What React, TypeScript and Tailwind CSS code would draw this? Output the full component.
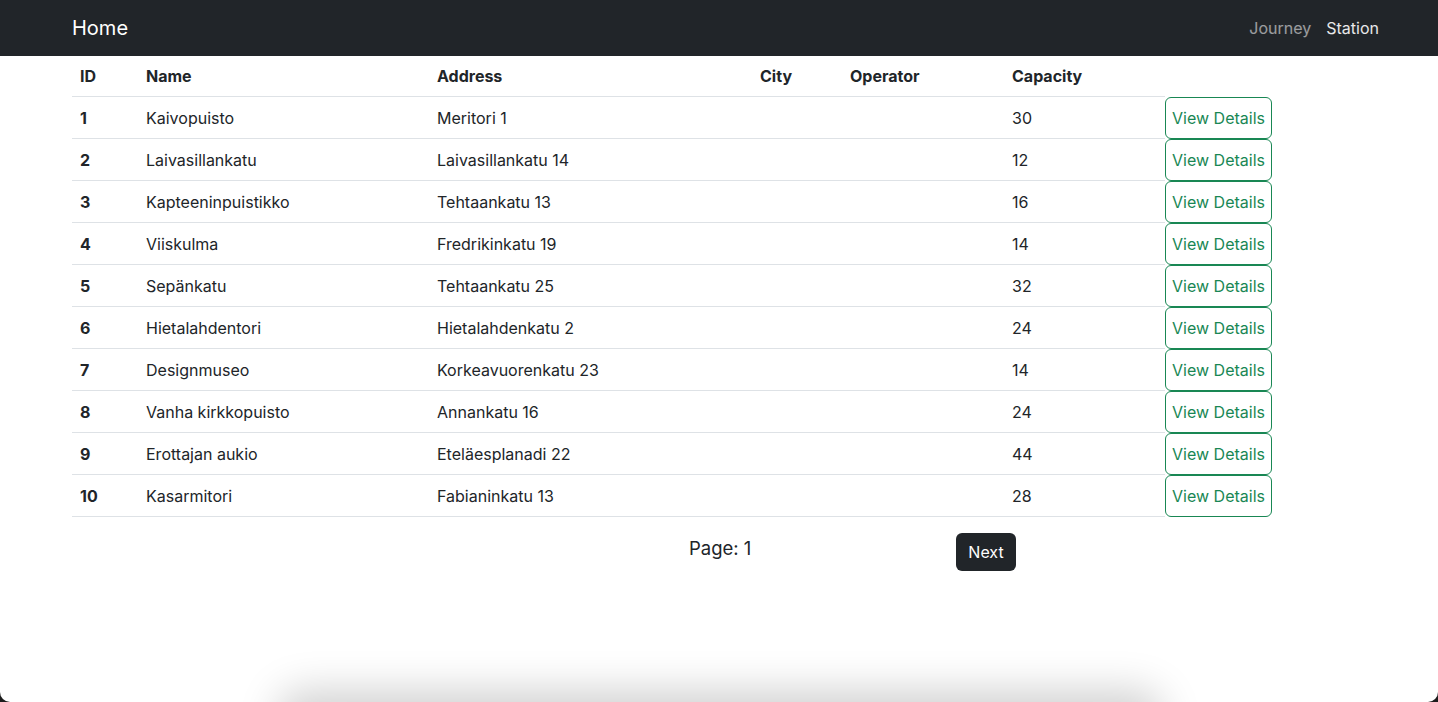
import React from 'react';

const stations = [
  { id: 1, name: 'Kaivopuisto', address: 'Meritori 1', capacity: 30 },
  { id: 2, name: 'Laivasillankatu', address: 'Laivasillankatu 14', capacity: 12 },
  { id: 3, name: 'Kapteeninpuistikko', address: 'Tehtaankatu 13', capacity: 16 },
  { id: 4, name: 'Viiskulma', address: 'Fredrikinkatu 19', capacity: 14 },
  { id: 5, name: 'Sepänkatu', address: 'Tehtaankatu 25', capacity: 32 },
  { id: 6, name: 'Hietalahdentori', address: 'Hietalahdenkatu 2', capacity: 24 },
  { id: 7, name: 'Designmuseo', address: 'Korkeavuorenkatu 23', capacity: 14 },
  { id: 8, name: 'Vanha kirkkopuisto', address: 'Annankatu 16', capacity: 24 },
  { id: 9, name: 'Erottajan aukio', address: 'Eteläesplanadi 22', capacity: 44 },
  { id: 10, name: 'Kasarmitori', address: 'Fabianinkatu 13', capacity: 28 },
];

export default function App() {
  return (
    <div className="h-[702px] bg-[#1c1c1c] font-['Inter','Liberation_Sans',sans-serif] text-[#212529]">
      <div className="relative h-full overflow-hidden rounded-b-[10px] bg-white">
        {/* Navbar */}
        <nav className="flex h-14 items-center bg-[#212529] pl-[72px] pr-[59px]">
          <span className="text-[20px] text-white">Home</span>
          <div className="ml-auto flex items-center gap-[15px] text-[16px]">
            <span className="text-white/55">Journey</span>
            <span className="text-white/90">Station</span>
          </div>
        </nav>

        {/* Table */}
        <div className="pl-[72px]">
          <div className="flex h-[41px] w-[1093px] items-center border-b border-[#dee2e6] font-bold">
            <div className="w-[66px] pl-2">ID</div>
            <div className="w-[291px] pl-2">Name</div>
            <div className="w-[323px] pl-2">Address</div>
            <div className="w-[90px] pl-2">City</div>
            <div className="w-[162px] pl-2">Operator</div>
            <div className="w-[161px] pl-2">Capacity</div>
          </div>
          {stations.map((s) => (
            <div key={s.id} className="flex h-[42px]">
              <div className="flex w-[1093px] items-center border-b border-[#dee2e6]">
                <div className="w-[66px] pl-2 font-bold">{s.id}</div>
                <div className="w-[291px] pl-2">{s.name}</div>
                <div className="w-[323px] pl-2">{s.address}</div>
                <div className="w-[90px] pl-2"></div>
                <div className="w-[162px] pl-2"></div>
                <div className="w-[161px] pl-2">{s.capacity}</div>
              </div>
              <button className="flex h-[42px] w-[107px] items-center justify-center rounded-[6px] border border-[#198754] text-[16px] text-[#198754]">
                View Details
              </button>
            </div>
          ))}

          {/* Pagination */}
          <div className="mt-4 flex items-center">
            <span className="ml-[617px] w-[267px] -translate-y-[3px] text-[18.5px]">Page: 1</span>
            <button className="h-[38px] w-[60px] rounded-[6px] bg-[#212529] text-[16px] text-white">
              Next
            </button>
          </div>
        </div>

        {/* Shadow of element below the fold */}
        <div className="absolute left-[290px] top-[702px] h-10 w-[860px] rounded-xl bg-white shadow-[0_0_40px_12px_rgba(0,0,0,0.18)]" />
      </div>
    </div>
  );
}
